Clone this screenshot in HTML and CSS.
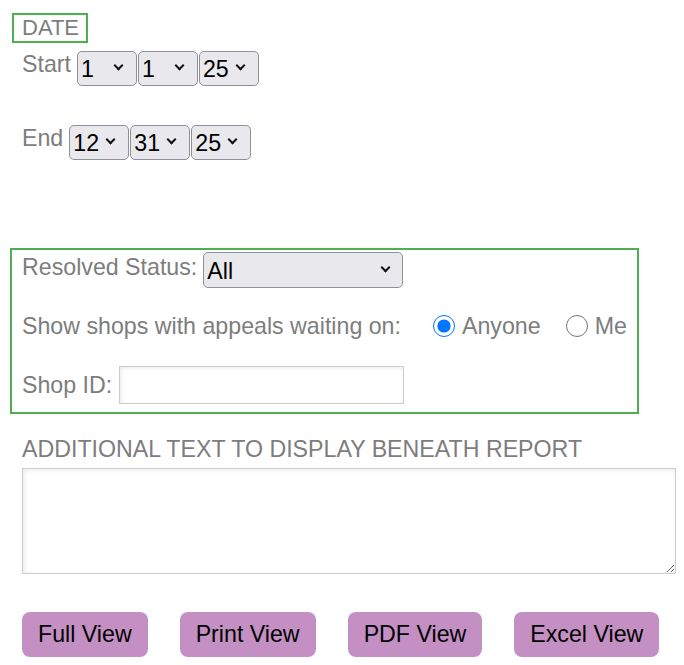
FILE: index.html
```html
<!DOCTYPE html>
<html>
<head>
<meta charset="utf-8">
<link rel="stylesheet" href="styles.css">
</head>
<body>
<div class="page">
  <div class="legend">DATE</div>
  <div class="date-row start">
    <span class="lbl">Start</span>
    <div class="sels">
      <span class="selwrap"><select class="sel"><option>1</option><option>12</option></select></span>
      <span class="selwrap"><select class="sel"><option>1</option><option>31</option></select></span>
      <span class="selwrap"><select class="sel"><option>25</option></select></span>
    </div>
  </div>
  <div class="date-row end">
    <span class="lbl">End</span>
    <div class="sels">
      <span class="selwrap"><select class="sel"><option>12</option></select></span>
      <span class="selwrap"><select class="sel"><option>31</option></select></span>
      <span class="selwrap"><select class="sel"><option>25</option></select></span>
    </div>
  </div>

  <div class="filters">
    <div class="f-row resolved">
      <span class="lbl">Resolved Status:</span>
      <span class="selwrap wide-wrap"><select class="sel wide"><option>All</option></select></span>
    </div>
    <div class="f-row appeals">
      <span class="lbl">Show shops with appeals waiting on:</span>
      <label class="opt first"><input type="radio" name="w" checked><span class="lbl">Anyone</span></label>
      <label class="opt"><input type="radio" name="w"><span class="lbl">Me</span></label>
    </div>
    <div class="f-row shop">
      <span class="lbl">Shop ID:</span>
      <input class="txt" type="text">
    </div>
  </div>

  <div class="heading">ADDITIONAL TEXT TO DISPLAY BENEATH REPORT</div>
  <textarea class="notes"></textarea>

  <div class="buttons">
    <button class="btn">Full View</button>
    <button class="btn">Print View</button>
    <button class="btn">PDF View</button>
    <button class="btn">Excel View</button>
  </div>
</div>
</body>
</html>
```

FILE: styles.css
```css
html, body {
  margin: 0;
  padding: 0;
  background: #ffffff;
}

.page {
  font-family: "Liberation Sans", Arial, sans-serif;
  font-size: 23.2px;
  color: #7d7d7d;
  width: 684px;
  padding-top: 13px;
}

.lbl {
  line-height: 26px;
  white-space: nowrap;
}

.legend {
  display: inline-block;
  margin-left: 12px;
  border: 2px solid #4caf50;
  padding: 0 7px 0 8px;
  line-height: 26px;
  font-size: 22px;
}

.date-row {
  display: flex;
  align-items: flex-start;
  gap: 6px;
  margin-left: 22px;
}

.date-row.start {
  margin-top: 8px;
}

.date-row.end {
  margin-top: 39px;
}

.sels {
  display: flex;
  gap: 1px;
}

.selwrap {
  position: relative;
  display: block;
}

.selwrap::after {
  content: "";
  position: absolute;
  right: 15px;
  top: 11px;
  width: 5px;
  height: 5px;
  border-right: 2px solid #111;
  border-bottom: 2px solid #111;
  transform: rotate(45deg);
  pointer-events: none;
}

.wide-wrap::after {
  right: 14px;
  top: 12px;
}

.sel {
  display: block;
  -webkit-appearance: none;
  appearance: none;
  font-family: "Liberation Sans", Arial, sans-serif;
  font-size: 23.2px;
  color: #000;
  width: 60px;
  height: 35px;
  padding: 1px 0 0 3px;
  border: 1px solid #8f8f9d;
  border-radius: 5px;
  background-color: #e9e9ed;
  margin: 0;
}

.sel.wide {
  width: 200px;
  height: 36px;
}

.filters {
  margin: 88px 0 0 10px;
  width: 629px;
  box-sizing: border-box;
  border: 2px solid #4caf50;
  padding: 2px 0 8px 10px;
}

.f-row {
  display: flex;
  align-items: center;
}

.f-row.resolved {
  align-items: flex-start;
  gap: 6px;
}

.f-row.resolved .lbl {
  margin-top: 2px;
}

.f-row.appeals {
  margin-top: 25px;
}

.opt {
  display: flex;
  align-items: center;
  gap: 7px;
  margin-left: 25px;
}

.opt.first {
  margin-left: 32px;
}

.opt input {
  width: 22px;
  height: 22px;
  margin: 0;
}

.f-row.shop {
  margin-top: 27px;
  gap: 7px;
}

.txt {
  width: 285px;
  height: 38px;
  box-sizing: border-box;
  border: 1px solid #c9d0cf;
  box-shadow: inset 1px 1px 4px rgba(0, 0, 0, 0.09);
  margin: 0;
  font-size: 20px;
}

.heading {
  margin: 22px 0 0 22px;
  line-height: 26px;
  font-size: 23.2px;
}

.notes {
  display: block;
  margin: 6px 0 0 22px;
  width: 654px;
  height: 106px;
  box-sizing: border-box;
  border: 1px solid #c9d0cf;
  box-shadow: inset 1px 1px 5px rgba(0, 0, 0, 0.09);
  border-radius: 0;
  resize: both;
}

.buttons {
  display: flex;
  gap: 32px;
  margin: 38px 0 0 22px;
}

.btn {
  font-family: "Liberation Sans", Arial, sans-serif;
  font-size: 23.2px;
  color: #000;
  background: #c490c3;
  border: none;
  border-radius: 8px;
  height: 45px;
  padding: 0 16px;
  margin: 0;
}
```
